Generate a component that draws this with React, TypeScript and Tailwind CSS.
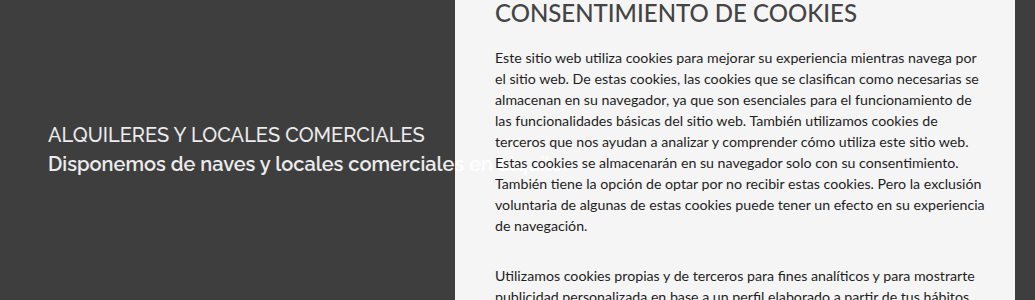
import React from 'react';

const paragraphs = [
  'Este sitio web utiliza cookies para mejorar su experiencia mientras navega por el sitio web. De estas cookies, las cookies que se clasifican como necesarias se almacenan en su navegador, ya que son esenciales para el funcionamiento de las funcionalidades básicas del sitio web. También utilizamos cookies de terceros que nos ayudan a analizar y comprender cómo utiliza este sitio web. Estas cookies se almacenarán en su navegador solo con su consentimiento. También tiene la opción de optar por no recibir estas cookies. Pero la exclusión voluntaria de algunas de estas cookies puede tener un efecto en su experiencia de navegación.',
  'Utilizamos cookies propias y de terceros para fines analíticos y para mostrarte publicidad personalizada en base a un perfil elaborado a partir de tus hábitos de navegación (por ejemplo, páginas visitadas).',
];

const App: React.FC = () => {
  return (
    <div className="relative h-[300px] w-full overflow-hidden bg-[#3e3e3e]">
      {/* hero text: above the panel background, below the panel text */}
      <div className="relative z-10 flex h-full flex-col justify-center pl-12 font-['Raleway','Lato',sans-serif] text-white/90">
        <h2 className="text-[20px] leading-[29px] font-medium">ALQUILERES Y LOCALES COMERCIALES</h2>
        <p className="text-[20px] leading-[29px] font-semibold">Disponemos de naves y locales comerciales en alquiler</p>
      </div>

      {/* cookie consent panel */}
      <div className="absolute top-0 right-5 bottom-0 w-[560px] bg-[#f5f5f5] pl-10 pr-[30px] font-['Lato',sans-serif] text-[#1e1e1e]">
        <div className="relative z-20">
          <h3 className="-mt-[4px] mb-[17px] text-[24px] leading-[34px] font-medium text-[#444]">
            CONSENTIMIENTO DE COOKIES
          </h3>
          {paragraphs.map((p, i) => (
            <p key={i} className="mb-[29px] text-[14.2px] leading-[21px]">
              {p}
            </p>
          ))}
        </div>
      </div>
    </div>
  );
};

export default App;
